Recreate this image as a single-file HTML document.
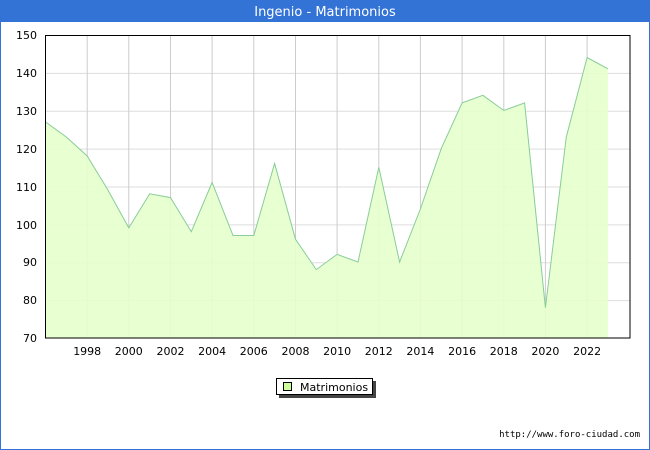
<!DOCTYPE html>
<html><head><style>
html,body{margin:0;padding:0;background:#fff;}
body{width:650px;height:450px;position:relative;overflow:hidden;font-family:"DejaVu Sans","Liberation Sans",sans-serif;}
</style></head><body>
<svg width="650" height="450" xmlns="http://www.w3.org/2000/svg" style="position:absolute;left:0;top:0">
<rect x="0.5" y="0.5" width="649" height="449" fill="#fff" stroke="#3373d6"/>
<rect x="0" y="0" width="650" height="22" fill="#3373d6"/>
<text x="325" y="16" fill="#fff" font-size="13" text-anchor="middle" font-family="DejaVu Sans,sans-serif">Ingenio - Matrimonios</text>
<g stroke="#dddddd" stroke-width="1">
<line x1="45" y1="73.4" x2="630" y2="73.4"/><line x1="45" y1="111.3" x2="630" y2="111.3"/>
<line x1="45" y1="149.1" x2="630" y2="149.1"/><line x1="45" y1="187" x2="630" y2="187"/>
<line x1="45" y1="224.9" x2="630" y2="224.9"/><line x1="45" y1="262.7" x2="630" y2="262.7"/>
<line x1="45" y1="300.6" x2="630" y2="300.6"/>
</g>
<g stroke="#cccccc" stroke-width="1">
<line x1="87.2" y1="35" x2="87.2" y2="338"/><line x1="128.8" y1="35" x2="128.8" y2="338"/>
<line x1="170.5" y1="35" x2="170.5" y2="338"/><line x1="212.1" y1="35" x2="212.1" y2="338"/>
<line x1="253.8" y1="35" x2="253.8" y2="338"/><line x1="295.5" y1="35" x2="295.5" y2="338"/>
<line x1="337.1" y1="35" x2="337.1" y2="338"/><line x1="378.8" y1="35" x2="378.8" y2="338"/>
<line x1="420.4" y1="35" x2="420.4" y2="338"/><line x1="462.1" y1="35" x2="462.1" y2="338"/>
<line x1="503.8" y1="35" x2="503.8" y2="338"/><line x1="545.4" y1="35" x2="545.4" y2="338"/>
<line x1="587.1" y1="35" x2="587.1" y2="338"/>
</g>
<polygon fill="#e6ffcc" fill-opacity="0.9" stroke="none" points="45.5,338 45.5,121.9 66.3,137.0 87.2,156.0 108.0,190.1 128.8,227.9 149.7,193.8 170.5,197.6 191.3,231.7 212.1,182.5 233.0,235.5 253.8,235.5 274.6,163.5 295.5,239.3 316.3,269.6 337.1,254.4 358.0,262.0 378.8,167.3 399.6,262.0 420.4,209.0 441.3,148.4 462.1,102.9 482.9,95.3 503.8,110.5 524.6,102.9 545.4,307.7 566.3,137.0 587.1,57.5 607.9,68.8 607.9,338"/>
<polyline fill="none" stroke="#88cc99" stroke-width="1" points="45.5,121.9 66.3,137.0 87.2,156.0 108.0,190.1 128.8,227.9 149.7,193.8 170.5,197.6 191.3,231.7 212.1,182.5 233.0,235.5 253.8,235.5 274.6,163.5 295.5,239.3 316.3,269.6 337.1,254.4 358.0,262.0 378.8,167.3 399.6,262.0 420.4,209.0 441.3,148.4 462.1,102.9 482.9,95.3 503.8,110.5 524.6,102.9 545.4,307.7 566.3,137.0 587.1,57.5 607.9,68.8"/>
<rect x="45.5" y="35.5" width="584.5" height="302.5" fill="none" stroke="#000" stroke-width="1"/>
<g font-size="11" fill="#000" text-anchor="end" font-family="DejaVu Sans,sans-serif">
<text x="37" y="39">150</text><text x="37" y="77">140</text><text x="37" y="115">130</text>
<text x="37" y="153">120</text><text x="37" y="191">110</text><text x="37" y="229">100</text>
<text x="37" y="266">90</text><text x="37" y="304">80</text><text x="37" y="342">70</text>
</g>
<g font-size="11" fill="#000" text-anchor="middle" font-family="DejaVu Sans,sans-serif">
<text x="87.2" y="355">1998</text><text x="128.8" y="355">2000</text><text x="170.5" y="355">2002</text>
<text x="212.1" y="355">2004</text><text x="253.8" y="355">2006</text><text x="295.5" y="355">2008</text>
<text x="337.1" y="355">2010</text><text x="378.8" y="355">2012</text><text x="420.4" y="355">2014</text>
<text x="462.1" y="355">2016</text><text x="503.8" y="355">2018</text><text x="545.4" y="355">2020</text>
<text x="587.1" y="355">2022</text>
</g>
<rect x="279" y="381" width="97" height="17" fill="#444"/>
<rect x="276.5" y="378.5" width="96" height="16" fill="#fff" stroke="#000"/>
<rect x="283.5" y="382.5" width="8" height="8" fill="#ccff99" stroke="#000"/>
<text x="300" y="391" font-size="11" fill="#000" font-family="DejaVu Sans,sans-serif">Matrimonios</text>
<text x="640" y="437" font-size="9" fill="#000" text-anchor="end" font-family="DejaVu Sans Mono,Liberation Mono,monospace">http://www.foro-ciudad.com</text>
</svg>
</body></html>
